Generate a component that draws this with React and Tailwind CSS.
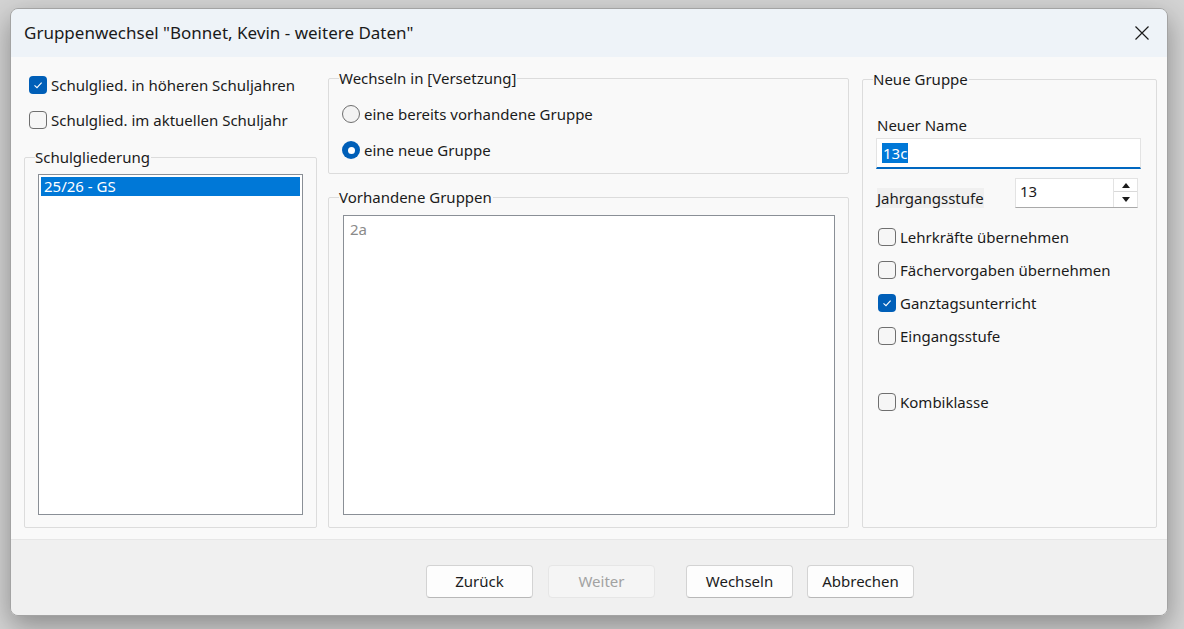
import React from 'react';

const font = { fontFamily: '"Noto Sans", "Open Sans", sans-serif' };

// Win11-style checkbox
const CheckBox = ({ checked, label, className = '' }) => (
    <div className={`flex items-center h-[18px] ${className}`}>
        {checked ? (
            <span className="w-[18px] h-[18px] rounded-[4px] bg-[#005fb8] flex items-center justify-center shrink-0">
                <svg width="12" height="12" viewBox="0 0 12 12">
                    <polyline points="2.5,6.3 5,8.6 9.6,3.6" fill="none" stroke="#ffffff" strokeWidth="1.1" />
                </svg>
            </span>
        ) : (
            <span className="w-[18px] h-[18px] rounded-[4px] border border-[#6f6f6f] bg-[#f6f6f6] shrink-0"></span>
        )}
        <span className="ml-[4px] text-[15px] text-[#1b1b1b] leading-[18px] whitespace-nowrap">{label}</span>
    </div>
);

const Radio = ({ checked, label, className = '' }) => (
    <div className={`flex items-center h-[18px] ${className}`}>
        {checked ? (
            <span className="w-[18px] h-[18px] rounded-full bg-[#005fb8] flex items-center justify-center shrink-0">
                <span className="w-[7px] h-[7px] rounded-full bg-white"></span>
            </span>
        ) : (
            <span className="w-[18px] h-[18px] rounded-full border border-[#6f6f6f] bg-[#f3f3f3] shrink-0"></span>
        )}
        <span className="ml-[4px] text-[15px] text-[#1b1b1b] leading-[18px] whitespace-nowrap">{label}</span>
    </div>
);

// group box with caption sitting on the top border
const GroupBox = ({ title, className = '', children }) => (
    <div className={`relative border border-[#dcdcdc] rounded-[2px] ${className}`}>
        <span className="absolute left-[10px] -top-[11px] bg-[#f9f9f9] text-[15px] leading-[20px] text-[#1b1b1b] whitespace-nowrap pr-[1px]">
            {title}
        </span>
        {children}
    </div>
);

const Button = ({ children, disabled }) => (
    <button
        className={`w-[107px] h-[33px] rounded-[4px] text-[15px] ${disabled
            ? 'bg-[#f5f5f5] border border-[#e6e6e6] text-[#a2a2a2]'
            : 'bg-[#fdfdfd] border border-[#d3d3d3] border-b-[#b8b8b8] text-[#1b1b1b]'}`}
    >
        {children}
    </button>
);

export default function App() {
    return (
        <div className="w-[1184px] h-[629px] bg-[#d4d4d4] pt-[8px] pl-[10px]" style={font}>
            <div className="w-[1158px] h-[608px] rounded-[8px] border border-[#a3a3a3] overflow-hidden flex flex-col shadow-[0_10px_28px_rgba(0,0,0,0.35)]">
                {/* Title bar */}
                <div className="h-[48px] bg-[#eef3f8] flex items-center justify-between pl-[13px] pr-[17px] shrink-0">
                    <span className="text-[17px] text-[#1a1a1a] whitespace-nowrap">
                        Gruppenwechsel "Bonnet, Kevin - weitere Daten"
                    </span>
                    <svg width="16" height="16" viewBox="0 0 16 16">
                        <path d="M1.5 1.5 L14.5 14.5 M14.5 1.5 L1.5 14.5" stroke="#1a1a1a" strokeWidth="1.2" />
                    </svg>
                </div>

                {/* Content */}
                <div className="h-[483px] bg-[#f9f9f9] border-b border-[#e6e6e6] flex pl-[13px] shrink-0">
                    {/* Left column */}
                    <div className="w-[293px] flex flex-col">
                        <CheckBox checked label="Schulglied. in höheren Schuljahren" className="mt-[19px] ml-[5px]" />
                        <CheckBox label="Schulglied. im aktuellen Schuljahr" className="mt-[17px] ml-[5px]" />
                        <GroupBox title="Schulgliederung" className="mt-[28px] h-[371px] px-[13px] pt-[16px] pb-[12px]">
                            <div className="h-full bg-white border border-[#8a8f96] p-[2px]">
                                <div className="h-[19px] bg-[#0078d7] text-white text-[15px] leading-[19px] pl-[3px]">25/26 - GS</div>
                            </div>
                        </GroupBox>
                    </div>

                    {/* Middle column */}
                    <div className="w-[521px] ml-[11px] flex flex-col">
                        <GroupBox title="Wechseln in [Versetzung]" className="mt-[21px] h-[96px] pl-[13px] pt-[26px]">
                            <Radio label="eine bereits vorhandene Gruppe" />
                            <Radio checked label="eine neue Gruppe" className="mt-[18px]" />
                        </GroupBox>
                        <GroupBox title="Vorhandene Gruppen" className="mt-[23px] h-[331px] pl-[14px] pr-[13px] pt-[17px] pb-[12px]">
                            <div className="h-full bg-white border border-[#8a8f96] pl-[6px] pt-[2px] text-[15px] text-[#8a8a8a]">2a</div>
                        </GroupBox>
                    </div>

                    {/* Right column */}
                    <div className="w-[295px] ml-[13px] flex flex-col">
                        <GroupBox title="Neue Gruppe" className="mt-[22px] h-[449px] pl-[13px] pr-[15px] flex flex-col">
                            <span className="mt-[35px] ml-[1px] text-[15px] leading-[20px] text-[#1b1b1b]">Neuer Name</span>
                            <div className="mt-[3px] h-[31px] bg-white border border-[#e3e3e3] border-b-2 border-b-[#0067c0] flex items-center pl-[5px]">
                                <span className="bg-[#0078d7] text-white text-[15px] leading-[20px] px-[1px]">13c</span>
                            </div>
                            <div className="mt-[9px] flex items-start justify-between">
                                <span className="mt-[10px] ml-[1px] bg-[#f0f0f0] text-[15px] leading-[20px] text-[#1b1b1b]">Jahrgangsstufe</span>
                                <div className="w-[123px] h-[30px] mr-[3px] bg-white border border-[#e3e3e3] border-b-[#a9a9a9] flex">
                                    <span className="flex-1 pl-[4px] text-[15px] leading-[24px] text-[#1b1b1b]">13</span>
                                    <div className="w-[24px] flex flex-col border-l border-[#e3e3e3]">
                                        <div className="h-[13px] flex items-center justify-center border-b border-[#d9d9d9]">
                                            <svg width="8" height="5" viewBox="0 0 8 5"><path d="M4 0 L8 5 L0 5 Z" fill="#1b1b1b" /></svg>
                                        </div>
                                        <div className="flex-1 flex items-center justify-center">
                                            <svg width="8" height="5" viewBox="0 0 8 5"><path d="M0 0 L8 0 L4 5 Z" fill="#1b1b1b" /></svg>
                                        </div>
                                    </div>
                                </div>
                            </div>
                            <CheckBox label="Lehrkräfte übernehmen" className="mt-[20px] ml-[2px]" />
                            <CheckBox label="Fächervorgaben übernehmen" className="mt-[15px] ml-[2px]" />
                            <CheckBox checked label="Ganztagsunterricht" className="mt-[15px] ml-[2px]" />
                            <CheckBox label="Eingangsstufe" className="mt-[15px] ml-[2px]" />
                            <CheckBox label="Kombiklasse" className="mt-[48px] ml-[2px]" />
                        </GroupBox>
                    </div>
                </div>

                {/* Footer buttons */}
                <div className="flex-1 bg-[#f0f0f0] flex items-start pt-[25px] pl-[415px]">
                    <Button>Zurück</Button>
                    <div className="ml-[15px]"><Button disabled>Weiter</Button></div>
                    <div className="ml-[31px]"><Button>Wechseln</Button></div>
                    <div className="ml-[14px]"><Button>Abbrechen</Button></div>
                </div>
            </div>
        </div>
    );
}
